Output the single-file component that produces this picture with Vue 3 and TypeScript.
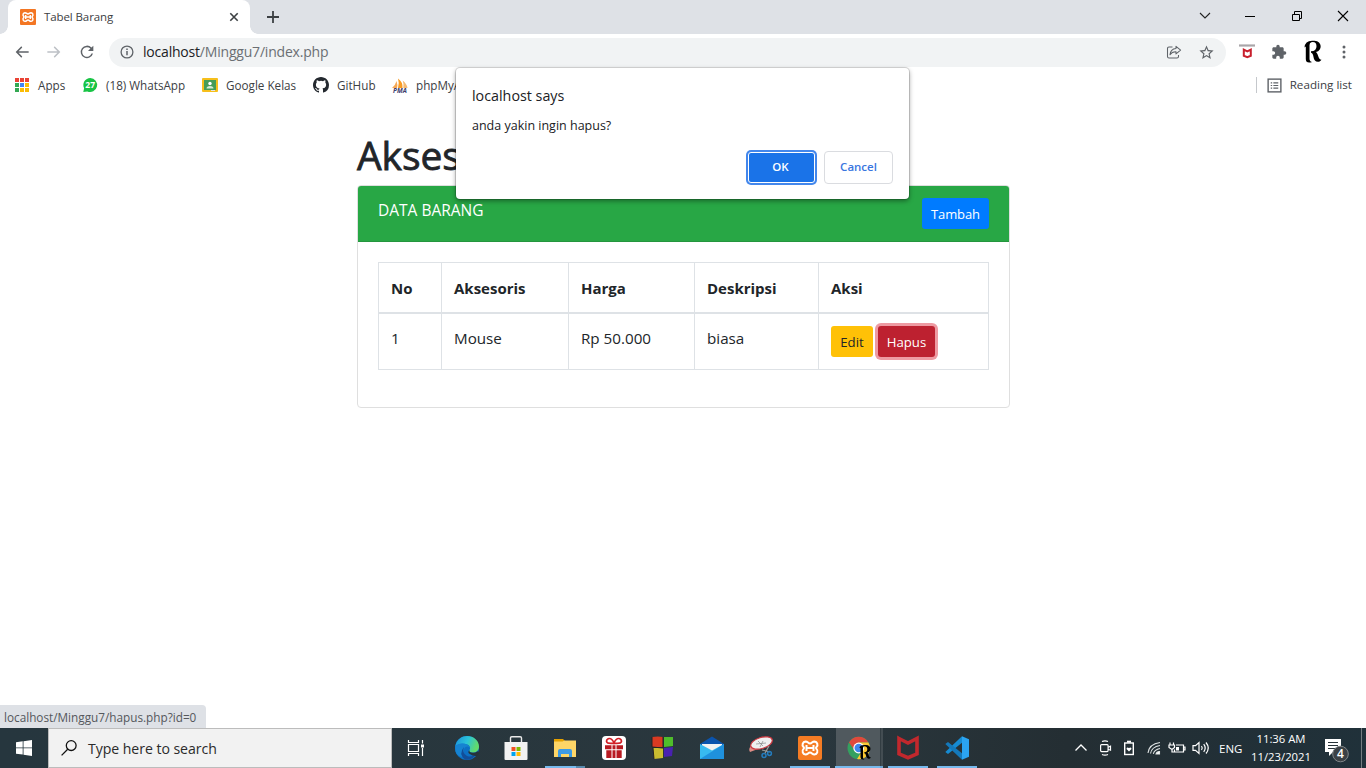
<script setup lang="ts">
interface Row {
  no: number
  name: string
  price: string
  description: string
}

const headings: string[] = ['No', 'Aksesoris', 'Harga', 'Deskripsi', 'Aksi']
const rows: Row[] = [{ no: 1, name: 'Mouse', price: 'Rp 50.000', description: 'biasa' }]
const dotColors: string[] = ['#ea4335', '#ea4335', '#ea4335', '#34a853', '#4285f4', '#fbbc04', '#34a853', '#fbbc04', '#fbbc04']
</script>

<template>
  <div class="screen">
    <header class="tabstrip">
      <div class="tab">
        <svg class="favicon" viewBox="0 0 24 24">
          <rect width="24" height="24" rx="1.500" fill="#f37623" />
          <path d="M7.500 5.500c2.500 0 2.500 2 4.500 2s2-2 4.500-2a3.300 3.300 0 0 1 2 5.600q-1 .9 0 1.800a3.300 3.300 0 0 1-2 5.600c-2.500 0-2.500-2-4.500-2s-2 2-4.500 2a3.300 3.300 0 0 1-2-5.600q1-.9 0-1.800a3.300 3.300 0 0 1 2-5.600zM8.500 9v6m7-6v6m-7-3h7" fill="none" stroke="#fff" stroke-width="2.200" />
        </svg>
        <span class="tab-title">Tabel Barang</span>
        <svg class="tab-close" viewBox="0 0 10 10"><path d="M1.300 1.300l7.400 7.400M8.700 1.300L1.300 8.700" stroke="#3c4043" stroke-width="1.600" /></svg>
      </div>
      <svg class="new-tab" viewBox="0 0 12 12"><path d="M6 0v12M0 6h12" stroke="#3c4043" stroke-width="1.800" /></svg>
      <div class="window-controls">
        <svg viewBox="0 0 12 12"><path d="M1 3l5 5 5-5" fill="none" stroke="#222" stroke-width="1.100" /></svg>
        <svg viewBox="0 0 12 12"><path d="M1 6.500h10" stroke="#000" /></svg>
        <svg viewBox="0 0 12 12"><path d="M1.500 4.500h7v6h-7zM3.500 4.500v-3h7v7h-2" fill="none" stroke="#000" /></svg>
        <svg viewBox="0 0 12 12"><path d="M1 1l10 10M11 1L1 11" stroke="#000" stroke-width="1.100" /></svg>
      </div>
    </header>

    <nav class="toolbar">
      <div class="nav-buttons">
        <svg viewBox="0 0 24 24" fill="#5f6368"><path d="M22 10.900H6.830l5.590-5.490L11 3.500l-8.500 8.500 8.500 8.500 1.410-1.910L6.830 13.100H22v-2.200z" /></svg>
        <svg viewBox="0 0 24 24" fill="#bdc1c6"><path d="M2 10.900h15.170l-5.590-5.490L13 3.500l8.500 8.500-8.500 8.500-1.410-1.910L17.170 13.100H2v-2.200z" /></svg>
        <svg viewBox="0 0 24 24" fill="#5f6368"><path d="M18.700 5.300A9.400 9.400 0 1 0 21 14.300h-2.300a7.200 7.200 0 1 1-1.600-7.400L13.500 10.500H21.500V2.500z" /></svg>
      </div>
      <div class="omnibox">
        <svg class="info" viewBox="0 0 14 14"><circle cx="7" cy="7" r="5.900" fill="none" stroke="#5f6368" stroke-width="1.300" /><path d="M7 6v4.200M7 3.500v1.500" stroke="#5f6368" stroke-width="1.500" /></svg>
        <span class="url"><b>localhost</b>/Minggu7/index.php</span>
        <svg class="share" viewBox="0 0 16 16" fill="none" stroke="#5f6368" stroke-width="1.050" stroke-linejoin="round"><path d="M6.500 3H3Q1.500 3 1.500 4.500v8Q1.500 14 3 14h8q1.500 0 1.500-1.500V11" /><path d="M10 2.300l4.600 3.800-4.600 3.800V7.700Q6 7.500 4 10.800 4.500 4.900 10 4.500z" /></svg>
        <svg class="star" viewBox="0 0 24 24" fill="#5f6368"><path d="M22 9.240l-7.190-.62L12 2 9.190 8.630 2 9.240l5.460 4.730L5.820 21 12 17.270 18.180 21l-1.630-7.030L22 9.240zM12 15.400l-3.760 2.270 1-4.280-3.320-2.880 4.380-.38L12 6.100l1.710 4.040 4.380.38-3.320 2.880 1 4.280L12 15.400z" /></svg>
      </div>
      <div class="extensions">
        <svg class="shield" viewBox="0 0 18 18"><path d="M1 2.500h16" stroke="#a9a6a9" stroke-width="2.200" /><path d="M5.800 6.700l3.500 1.700 3.500-1.700v6.100l-3.500 1.300-3.500-1.300z" fill="none" stroke="#c8202d" stroke-width="2" /></svg>
        <svg class="puzzle" viewBox="0 0 24 24" fill="#5f6368"><path d="M20.500 11H19V7c0-1.100-.9-2-2-2h-4V3.500C13 2.120 11.880 1 10.500 1S8 2.120 8 3.500V5H4c-1.100 0-1.990.9-1.990 2v3.800H3.500c1.490 0 2.700 1.210 2.700 2.700s-1.210 2.700-2.700 2.700H2V20c0 1.100.9 2 2 2h3.800v-1.500c0-1.490 1.210-2.700 2.700-2.700s2.700 1.210 2.700 2.700V22H17c1.100 0 2-.9 2-2v-4h1.500a2.500 2.500 0 0 0 0-5z" /></svg>
        <svg class="profile" viewBox="0 0 20 24"><path d="M1.500 7.500Q2 1 9 .8h2.500c8 .5 8 10 1.500 11.200 2.500 2 2 7.700 5.500 7.700-3.500 4.300-7.500 1.500-8-2.700-.6-4.200-2.500-4.200-2.500-4.200v-1.500q5.500 0 5.500-5T8.300 2.200q-1.800.3-1.800 3v13.500q0 3 2.800 3.300-6.500 2-6.500-3V6.500z" /></svg>
        <svg class="menu" viewBox="0 0 4 16" fill="#5f6368"><circle cx="2" cy="3" r="1.500" /><circle cx="2" cy="8" r="1.500" /><circle cx="2" cy="13" r="1.500" /></svg>
      </div>
    </nav>

    <div class="bookmarks">
      <div class="bookmark-list">
        <div class="bookmark">
          <svg viewBox="0 0 16 16"><rect v-for="(color, i) in dotColors" :key="i" :x="1 + (i % 3) * 5" :y="1 + Math.floor(i / 3) * 5" width="4" height="4" :fill="color" /></svg>
          <span>Apps</span>
        </div>
        <div class="bookmark">
          <svg viewBox="0 0 16 16"><path d="M8.300 1a7 7 0 1 1-3 13.400L1.300 15l.8-3.800A7 7 0 0 1 8.300 1z" fill="#18c445" /><text x="8.200" y="11.200" text-anchor="middle" class="badge-text">27</text></svg>
          <span>(18) WhatsApp</span>
        </div>
        <div class="bookmark">
          <svg viewBox="0 0 16 16"><rect y="1" width="16" height="14" rx="1" fill="#f6bf1b" /><rect x="2" y="3" width="12" height="10" fill="#459c58" /><circle cx="8" cy="6.500" r="1.700" fill="#fff" /><path d="M4.500 11.500q0-2.500 3.500-2.500t3.500 2.500z" fill="#d5ead5" /><path d="M9 13h4v1H9z" fill="#e3e3e3" /></svg>
          <span>Google Kelas</span>
        </div>
        <div class="bookmark">
          <svg viewBox="0 0 16 16"><path fill="#24292f" d="M8 0C3.580 0 0 3.580 0 8c0 3.540 2.290 6.530 5.470 7.590.4.07.55-.17.55-.38 0-.19-.01-.82-.01-1.490-2.010.37-2.530-.49-2.690-.94-.09-.23-.48-.94-.82-1.130-.28-.15-.68-.52-.01-.53.63-.01 1.080.58 1.230.82.72 1.210 1.870.87 2.330.66.07-.52.28-.87.51-1.070-1.780-.2-3.640-.89-3.640-3.950 0-.87.31-1.590.82-2.150-.08-.2-.36-1.020.08-2.120 0 0 .67-.21 2.200.82a7.600 7.600 0 0 1 4 0c1.530-1.040 2.200-.82 2.200-.82.44 1.100.16 1.920.08 2.120.51.56.82 1.270.82 2.150 0 3.070-1.870 3.750-3.650 3.950.29.25.54.73.54 1.480 0 1.070-.01 1.930-.01 2.200 0 .21.15.46.55.38A8.010 8.010 0 0 0 16 8c0-4.420-3.580-8-8-8z" /></svg>
          <span>GitHub</span>
        </div>
        <div class="bookmark">
          <svg viewBox="0 0 16 16"><path d="M0 11q3.500-3 4.500-7 1.500 4 .5 7z" fill="#f5a957" /><path d="M6 11q1.500-5 0-9.500Q11 5 10.500 11z" fill="#f89c25" /><path d="M11.300 11q.7-4-.6-7.500Q15 7 15.500 11z" fill="#f5ba72" /><text x="8" y="16" text-anchor="middle" class="pma-text">PMA</text></svg>
          <span>phpMyA</span>
        </div>
      </div>
      <div class="reading-list">
        <svg viewBox="0 0 16 16" fill="none" stroke="#5f6368" stroke-width="1.500"><rect x="1.200" y="1.200" width="13.600" height="13.600" /><path d="M4 5.200h1.500M4 8h1.500M4 10.800h1.500M6.800 5.200H12M6.800 8H12M6.800 10.800H12" stroke-width="1.200" /></svg>
        <span>Reading list</span>
      </div>
    </div>

    <main class="page">
      <h1>Akses</h1>
      <section class="card">
        <div class="card-header">
          <span class="card-title">DATA BARANG</span>
          <button class="btn btn-primary">Tambah</button>
        </div>
        <div class="card-body">
          <table>
            <colgroup><col class="c-no" /><col class="c-name" /><col class="c-price" /><col class="c-desc" /><col class="c-action" /></colgroup>
            <thead><tr><th v-for="heading in headings" :key="heading">{{ heading }}</th></tr></thead>
            <tbody>
              <tr v-for="row in rows" :key="row.no">
                <td>{{ row.no }}</td>
                <td>{{ row.name }}</td>
                <td>{{ row.price }}</td>
                <td>{{ row.description }}</td>
                <td>
                  <div class="actions">
                    <button class="btn btn-warning">Edit</button>
                    <button class="btn btn-danger">Hapus</button>
                  </div>
                </td>
              </tr>
            </tbody>
          </table>
        </div>
      </section>
    </main>

    <div class="dialog" role="dialog">
      <div class="dialog-title">localhost says</div>
      <div class="dialog-message">anda yakin ingin hapus?</div>
      <div class="dialog-buttons">
        <button class="ok">OK</button>
        <button class="cancel">Cancel</button>
      </div>
    </div>

    <div class="status"><span>localhost/Minggu7/hapus.php?id=0</span></div>

    <footer class="taskbar">
      <div class="start">
        <svg viewBox="0 0 16 16" fill="#fff"><path d="M0 2.300l6.700-.95v6.200H0zM7.500 1.200L16 0v7.550H7.500zM0 8.350h6.700v6.200L0 13.700zM7.500 8.350H16V16l-8.500-1.200z" /></svg>
      </div>
      <div class="search">
        <svg viewBox="0 0 16 16" fill="none" stroke="#111" stroke-width="1.300"><circle cx="10.200" cy="5.600" r="4.900" /><path d="M6.700 9.200L.6 15.400" /></svg>
        <span>Type here to search</span>
      </div>
      <div class="task view">
        <svg class="i18" viewBox="0 0 18 18" fill="none" stroke="#fff" stroke-width="1.200"><path d="M1.500 1v2.500h10V1M1.500 17v-2.500h10V17M1.500 5.500h10v7h-10zM15.500 1v3.500M15.500 9v8" /><path d="M14 5.500h3v3h-3z" fill="#fff" stroke="none" /></svg>
      </div>
      <div class="task">
        <svg viewBox="0 0 24 24"><defs><linearGradient id="edgeTop" x1="0" y1="0" x2="1" y2=".3"><stop stop-color="#1b8fdb" /><stop offset=".55" stop-color="#2bc4d9" /><stop offset="1" stop-color="#62dc6b" /></linearGradient></defs><circle cx="12" cy="12" r="12" fill="#0c70c4" /><path d="M.3 10C2 3 7 0 12 0c7 0 12 5 12 10.500 0 4-3 6-6 6-3.500 0-4.500-1.500-3.500-2.500 2-3-1-6-4.500-6-4 0-8 .5-9.700 2z" fill="url(#edgeTop)" /><path d="M.3 10Q4 6.500 9.500 7.500q5 1.500 5.500 5-2-3.500-5-1-3.500 3.500 1 9-8 2-10.500-5Q0 12 .3 10z" fill="#1683d1" /><path d="M9 11q-2.500 6 3 9 5 2 9.500-2.500Q17 25 10 23.500 3 18 9 11z" fill="#124e99" /><path d="M14.500 14q-.8 2.800 3.500 2.800 2.500 0 4.500-1.500l2 1-2.500 3.700q-4 .5-8-2.500-1.500-1.500.5-3.500z" fill="#26343b" /></svg>
      </div>
      <div class="task">
        <svg viewBox="0 0 24 24"><path d="M6.500 7V2q0-1.300 1.300-1.300h8.400q1.300 0 1.300 1.300v5" fill="none" stroke="#e9e9e9" stroke-width="1.400" /><path d="M.5 6h23v17q0 1-1 1h-21q-1 0-1-1z" fill="#f2f2f2" /><path d="M7.500 11h4v4h-4z" fill="#f25022" /><path d="M12.500 11h4v4h-4z" fill="#7fba00" /><path d="M7.500 16h4v4h-4z" fill="#00a4ef" /><path d="M12.500 16h4v4h-4z" fill="#ffb900" /></svg>
      </div>
      <div class="task running stacked">
        <svg viewBox="0 0 24 24"><path d="M1 3h9l2 2h11v2H1z" fill="#e6a100" /><path d="M1 5.500h8.500l2-1H23V21H1z" fill="#ffd667" /><path d="M5 21v-6q0-2 2-2h10q2 0 2 2v6h-3v-3H8v3z" fill="#3d9be5" /></svg>
      </div>
      <div class="task">
        <svg viewBox="0 0 24 24"><rect width="24" height="24" rx="4" fill="#fff" /><path d="M12 7.200Q5 8 4.500 5.500 4.500 3 7 2.500q3-.3 5 4.500 2-4.800 5-4.500 2.500.5 2.500 3Q19 8 12 7.200z" fill="none" stroke="#d21f26" stroke-width="1.600" /><path d="M3 9.300h6.500v4H3zM14.500 9.300H21v4h-6.500zM10.500 9.300h3v4h-3zM4.300 14.300h5.200V22H4.300zM14.500 14.300h5.200V22h-5.200zM10.500 14.300h3V22h-3z" fill="#b81b22" /></svg>
      </div>
      <div class="task">
        <svg viewBox="0 0 24 24"><path d="M1 1q6-1 11 0v10H1z" fill="#d93a22" /><path d="M13 1h9v9l-9 1z" fill="#4fbd2b" /><path d="M2 12h10v10l-9 1z" fill="#c9bd30" /><path d="M13 12l9-1-1 9-8 1z" fill="#4921b1" /><path d="M1 1v10l11 1V1M2 12l1 11" fill="none" stroke="#242222" /></svg>
      </div>
      <div class="task">
        <svg viewBox="0 0 24 24"><path d="M0 8l12-7.500L24 8v4H0z" fill="#0b54ad" /><path d="M2 8h20v7H2z" fill="#f2f2f2" /><path d="M0 8l12 6.500L24 8v15H0z" fill="#38baf0" /><path d="M0 23L24 8v15z" fill="#1f91dd" /></svg>
      </div>
      <div class="task">
        <svg viewBox="0 0 24 24"><path d="M2 10q-3 3-1 6l8-3" fill="#dd8c86" /><ellipse cx="12.500" cy="7" rx="11.200" ry="5.500" transform="rotate(-17 12.500 7)" fill="#eff0f0" stroke="#cf3941" stroke-width="1.200" /><path d="M7 8l10-1M11 11l3-6M9 5l5 5" stroke="#888" stroke-width=".7" /><path d="M13 14l8 2M20 10l-4 7" stroke="#999" stroke-width="1.200" /><circle cx="15" cy="19.500" r="2" fill="none" stroke="#247cbe" stroke-width="1.500" /><circle cx="20.500" cy="17.500" r="1.900" fill="none" stroke="#247cbe" stroke-width="1.500" /></svg>
      </div>
      <div class="task running">
        <svg viewBox="0 0 24 24"><rect width="24" height="24" rx="2" fill="#f57c24" /><path d="M7.500 5.500c2.500 0 2.500 2 4.500 2s2-2 4.500-2a3.300 3.300 0 0 1 2 5.600q-1 .9 0 1.800a3.300 3.300 0 0 1-2 5.600c-2.500 0-2.500-2-4.500-2s-2 2-4.500 2a3.300 3.300 0 0 1-2-5.600q1-.9 0-1.800a3.300 3.300 0 0 1 2-5.600zM8.500 9v6m7-6v6m-7-3h7" fill="none" stroke="#fff" stroke-width="2" /></svg>
      </div>
      <div class="task chrome">
        <svg viewBox="0 0 24 24"><circle cx="11.700" cy="12" r="11.200" fill="#34a060" /><path d="M2 6.400A11.200 11.200 0 0 1 21.400 6.400H12L8 15z" fill="#df493c" /><path d="M12 6.400h9.500q3.500 7-1 12.500-4 5-10.500 4.200L17 12z" fill="#fbc934" /><circle cx="11.700" cy="12" r="5.400" fill="#fff" /><circle cx="11.700" cy="12" r="4.200" fill="#4086ee" /><path d="M12.500 12q0-3 5-3h1.500c6 .2 5.500 6.800 1.500 7.600 1 1.400 1.200 5 3.500 5-2 2.400-4.500.8-5-2q-.4-2.400-1.700-2.400v-1q3 0 3-3t-3-3q-1.300 0-1.300 2v9q0 2 1.500 2.200-4 .8-4-2.200V12z" /></svg>
      </div>
      <div class="task running">
        <svg viewBox="0 0 24 24"><path d="M3 2.500l9 4.500 9-4.500v15.300l-9 3.900-9-3.900z" fill="none" stroke="#c2282d" stroke-width="3.600" /></svg>
      </div>
      <div class="task running">
        <svg viewBox="0 0 24 24"><path d="M17 .2L24 3.300v17.400l-7 3.100z" fill="#2ba4f1" /><path d="M17 .2v6.600L3 18 .3 16z" fill="#168bd2" /><path d="M.3 8L3 6l14 11.200v6.600z" fill="#1479bb" /></svg>
      </div>
      <div class="tray">
        <svg class="t-up" viewBox="0 0 14 14"><path d="M1.500 9.500L7 4l5.500 5.500" fill="none" stroke="#fff" stroke-width="1.300" /></svg>
        <svg class="t-meet" viewBox="0 0 14 16" fill="none" stroke="#fff" stroke-width="1.200"><rect x="1.600" y="4.600" width="7.500" height="7" rx="1" /><path d="M9 7.200l2.500-1v4l-2.500-1M3 1.500q3-1.300 6 0M3 14.500q3 1.300 6 0" /></svg>
        <svg class="t-batt" viewBox="0 0 12 16"><rect x="1.700" y="3" width="8.600" height="11.500" fill="none" stroke="#fff" stroke-width="1.400" /><path d="M4 .7h4v2H4z" fill="#fff" /><path d="M6 11.500L3.500 9q0-2.500 2.500-1 2.500-1.500 2.500 1z" fill="#fff" /></svg>
        <svg class="t-wifi" viewBox="0 0 14 14" fill="none" stroke="#dfe3e4" stroke-width="1.100"><path d="M1 12Q2 3 13 1.500M3.500 12.500Q4.500 6 13 4.500M6.300 12.800Q7.500 8.500 13 7.500" /><path d="M9 13q.5-2.500 3.500-2.500V13z" fill="#fff" /></svg>
        <svg class="t-plug" viewBox="0 0 18 12" fill="none" stroke="#fff" stroke-width="1.200"><path d="M8 3h7.500v7H6.500V7.500M15.500 5h1.500v3h-1.500M2 .5V3M5.500.5V3M1 3h5.500v2.500L4 7.500 1 5.500zM4 7.500V10h2" /><path d="M8 5h3v3.500H8z" fill="#fff" stroke="none" /></svg>
        <svg class="t-vol" viewBox="0 0 18 14" fill="none" stroke="#fff" stroke-width="1.200"><path d="M1 4.700h2.500L7 1.500v11L3.500 9.300H1zM9.500 5q1.500 2 0 4M11.700 3.200q3 3.800 0 7.600M14 1.500q4.500 5.500 0 11" /></svg>
        <span class="lang">ENG</span>
        <div class="clock"><span>11:36 AM</span><span>11/23/2021</span></div>
        <svg class="notice" viewBox="0 0 25 26"><path d="M1 2h16v13H9l-4 4v-4H1z" fill="#fff" /><path d="M4 5.500h10M4 8.500h10M4 11.500h10" stroke="#28343a" /><circle cx="16.500" cy="17" r="7.800" fill="#3b4145" stroke="#808689" /><text x="16.500" y="21.300" text-anchor="middle" class="notice-count">4</text></svg>
        <i class="show-desktop"></i>
      </div>
    </footer>
  </div>
</template>

<style>
body { margin: 0; overflow: hidden; }
</style>

<style scoped>
* { box-sizing: border-box; }
svg { display: block; flex: none; overflow: visible; }
button { font-family: inherit; margin: 0; }
.screen { position: relative; width: 1366px; height: 768px; display: flex; flex-direction: column; background: #fff; font-family: "Open Sans", "Noto Sans", sans-serif; font-size: 11.700px; color: #3c4043; white-space: nowrap; overflow: hidden; }

.tabstrip { height: 34px; flex: none; background: #dee1e6; display: flex; align-items: center; padding-left: 8px; }
.tab { position: relative; width: 242px; height: 34px; background: #fff; border-radius: 8px 8px 0 0; display: flex; align-items: center; padding: 0 11px 0 12px; }
.tab::before, .tab::after { content: ""; position: absolute; bottom: 0; width: 8px; height: 8px; }
.tab::before { left: -8px; background: radial-gradient(circle at 0 0, transparent 7.500px, #fff 8px); }
.tab::after { right: -8px; background: radial-gradient(circle at 100% 0, transparent 7.500px, #fff 8px); }
.favicon { width: 16px; height: 16px; }
.tab-title { margin-left: 8px; flex: 1; font-size: 11.500px; letter-spacing: -0.1px; line-height: 16px; padding-bottom: 1px; }
.tab-close { width: 10px; height: 10px; }
.new-tab { width: 12px; height: 12px; margin-left: 17px; }
.window-controls { margin-left: auto; width: 184px; display: grid; grid-template-columns: 45px 46px 47px 46px; justify-items: center; margin-top: -3px; }
.window-controls svg { width: 12px; height: 12px; }

.toolbar { height: 36px; flex: none; display: flex; align-items: center; padding-top: 1px; }
.nav-buttons { width: 109px; display: grid; grid-template-columns: 32px 32px 33px; padding-left: 6px; justify-items: center; margin-top: -1px; }
.nav-buttons svg { width: 16px; height: 16px; }
.omnibox { width: 1117px; height: 29px; border-radius: 15px; background: #f1f3f4; display: flex; align-items: center; padding: 0 11px; }
.info { width: 14px; height: 14px; margin-top: -1px; }
.url { flex: 1; margin-left: 9px; font-size: 14px; line-height: 20px; color: #6b6f73; letter-spacing: -0.2px; padding-bottom: 2px; }
.url b { font-weight: 400; color: #202124; }
.share { width: 16px; height: 16px; margin: -1px 16px 0 0; }
.star { width: 17px; height: 17px; }
.extensions { flex: 1; display: flex; align-items: center; padding-left: 12px; }
.shield { width: 18px; height: 18px; margin-top: -2px; }
.puzzle { width: 16px; height: 16px; margin: -1px 0 0 15px; }
.profile { width: 20px; height: 24px; margin: -1px 0 0 16px; }
.menu { width: 4px; height: 16px; margin: -1px 0 0 19px; }

.bookmarks { height: 30px; flex: none; display: flex; align-items: center; justify-content: space-between; padding: 0 14px; line-height: 16px; }
.bookmark-list { display: grid; grid-template-columns: 68px 120px 111px 79px 78px; margin-right: auto; }
.bookmark { display: flex; align-items: center; gap: 8px; }
.bookmark span, .reading-list span { padding-bottom: 1px; }
.bookmark svg { width: 16px; height: 16px; }
.badge-text { font-size: 8.500px; font-weight: 700; fill: #fff; }
.pma-text { font-size: 6.500px; font-weight: 700; font-style: italic; fill: #3c3c6c; }
.reading-list { display: flex; align-items: center; gap: 8px; border-left: 1px solid #c5c8cc; height: 16px; padding-left: 10px; font-size: 11.650px; }
.reading-list svg { width: 15px; height: 15px; }

.page { flex: 1; width: 653px; margin-left: 357px; padding-top: 31px; color: #212529; }
h1 { margin: 0 0 7px; font-size: 39px; line-height: 48px; font-weight: 400; letter-spacing: -0.1px; -webkit-text-stroke: 0.8px #212529; }
.card { width: 653px; height: 223px; margin-top: -1px; border: 1px solid #dfdfdf; border-radius: 4px; }
.card-header { height: 56px; background: #28a745; border-bottom: 1px solid #24963e; border-radius: 3px 3px 0 0; display: flex; justify-content: space-between; align-items: flex-start; padding: 12px 20px; color: #fff; font-size: 15.500px; line-height: 24px; }
.btn { height: 31px; border: 0; border-radius: 3px; font-size: 13.200px; line-height: 32px; padding: 0; text-align: center; }
.btn-primary { width: 67px; background: #007bff; color: #fff; font-size: 13px; line-height: 33px; letter-spacing: -0.1px; }
.card-body { padding: 20px; }
table { width: 610px; border-collapse: collapse; table-layout: fixed; font-size: 15.200px; line-height: 24px; }
.c-no { width: 63px; }
.c-name { width: 127px; }
.c-price { width: 126px; }
.c-desc { width: 124px; }
.c-action { width: 170px; }
th, td { border: 1px solid #dee2e6; padding: 12px; text-align: left; vertical-align: top; }
th { border-bottom-width: 2px; font-weight: 700; height: 50px; font-size: 15px; padding-top: 13px; padding-bottom: 11px; }
td { height: 56px; }
.actions { display: flex; gap: 5px; height: 31px; }
.btn-warning { width: 42px; background: #ffc107; color: #212529; }
.btn-danger { width: 57px; background: #bd2130; color: #fff; box-shadow: 0 0 0 3px #ee9aa2; }

.dialog { position: absolute; left: 456px; top: 68px; width: 453px; height: 131px; background: #fff; border-radius: 4px; box-shadow: 0 0 0 1px rgba(0,0,0,.14), 0 2px 5px rgba(0,0,0,.4); padding: 18px 16px 15px; color: #202124; }
.dialog-title { font-size: 14.300px; line-height: 20px; }
.dialog-message { margin-top: 11px; font-size: 12.500px; line-height: 18px; }
.dialog-buttons { display: flex; justify-content: flex-end; align-items: center; gap: 10px; margin-top: 16px; }
.dialog button { border-radius: 4px; padding: 0 0 2px; font-size: 11.500px; font-weight: 600; }
.dialog .ok { width: 67px; height: 31px; margin-right: -1px; padding-right: 2px; background: #1a73e8; color: #fff; border: 1px solid #fff; border-radius: 3px; box-shadow: 0 0 0 2px #4387ec; }
.dialog .cancel { width: 69px; height: 33px; border: 1px solid #dadce0; background: #fff; color: #3a76df; }

.status { width: 206px; height: 23px; flex: none; background: #dee1e6; border-radius: 0 4px 0 0; padding-left: 4px; line-height: 25px; font-size: 11.750px; color: #55585c; }

.taskbar { height: 40px; flex: none; display: flex; background: linear-gradient(90deg, #26363e, #2a373d 60%, #242e33 78%, #20313a); color: #fff; }
.start { width: 48px; display: grid; place-items: center; }
.start svg { width: 16px; height: 16px; }
.search { width: 344px; background: #f2f2f2; border: 1px solid #bcbcbc; display: flex; align-items: center; padding-left: 12px; font-size: 14.100px; letter-spacing: -0.05px; color: #2b2b2b; }
.search svg { width: 16px; height: 16px; margin-right: 11px; }
.task { width: 49px; flex: none; display: grid; place-items: center; position: relative; }
.task.view { width: 50.500px; padding-right: 2px; }
.task svg { width: 24px; height: 24px; }
.task svg.i18 { width: 18px; height: 18px; }
.running::after { content: ""; position: absolute; left: 4.500px; bottom: 0; width: 40px; height: 2px; background: #76b9ed; }
.stacked::after { background: linear-gradient(90deg, #76b9ed 31px, #5789ad 31px); }
.chrome { background: linear-gradient(90deg, transparent .5px, #50595e .5px, #50595e 45px, #323d42 45px, #323d42 46px, #434d52 46px, #434d52 48px, transparent 48px); }
.chrome::after { content: ""; position: absolute; left: .5px; bottom: 0; width: 47.500px; height: 2px; background: linear-gradient(90deg, #76b9ed 45px, #6ca6d3 45px); }
.tray { margin-left: auto; width: 293px; display: flex; align-items: center; }
.t-up { width: 14px; height: 14px; margin-left: 1px; }
.t-meet { width: 14px; height: 16px; margin-left: 11px; }
.t-batt { width: 12px; height: 16px; margin-left: 10px; }
.t-wifi { width: 14px; height: 14px; margin-left: 12px; }
.t-plug { width: 18px; height: 12px; margin-left: 7px; }
.t-vol { width: 18px; height: 14px; margin-left: 6px; }
.lang { width: 24px; margin-left: 9px; font-size: 11.500px; }
.clock { width: 66px; margin-left: 5px; display: flex; flex-direction: column; align-items: center; font-size: 11.300px; line-height: 18px; }
.notice { width: 25px; height: 26px; margin: 4px 0 0 10px; }
.notice-count { font-size: 12px; font-weight: 600; fill: #fff; }
.show-desktop { width: 1px; height: 40px; background: #747d81; margin-left: 12px; }
</style>
